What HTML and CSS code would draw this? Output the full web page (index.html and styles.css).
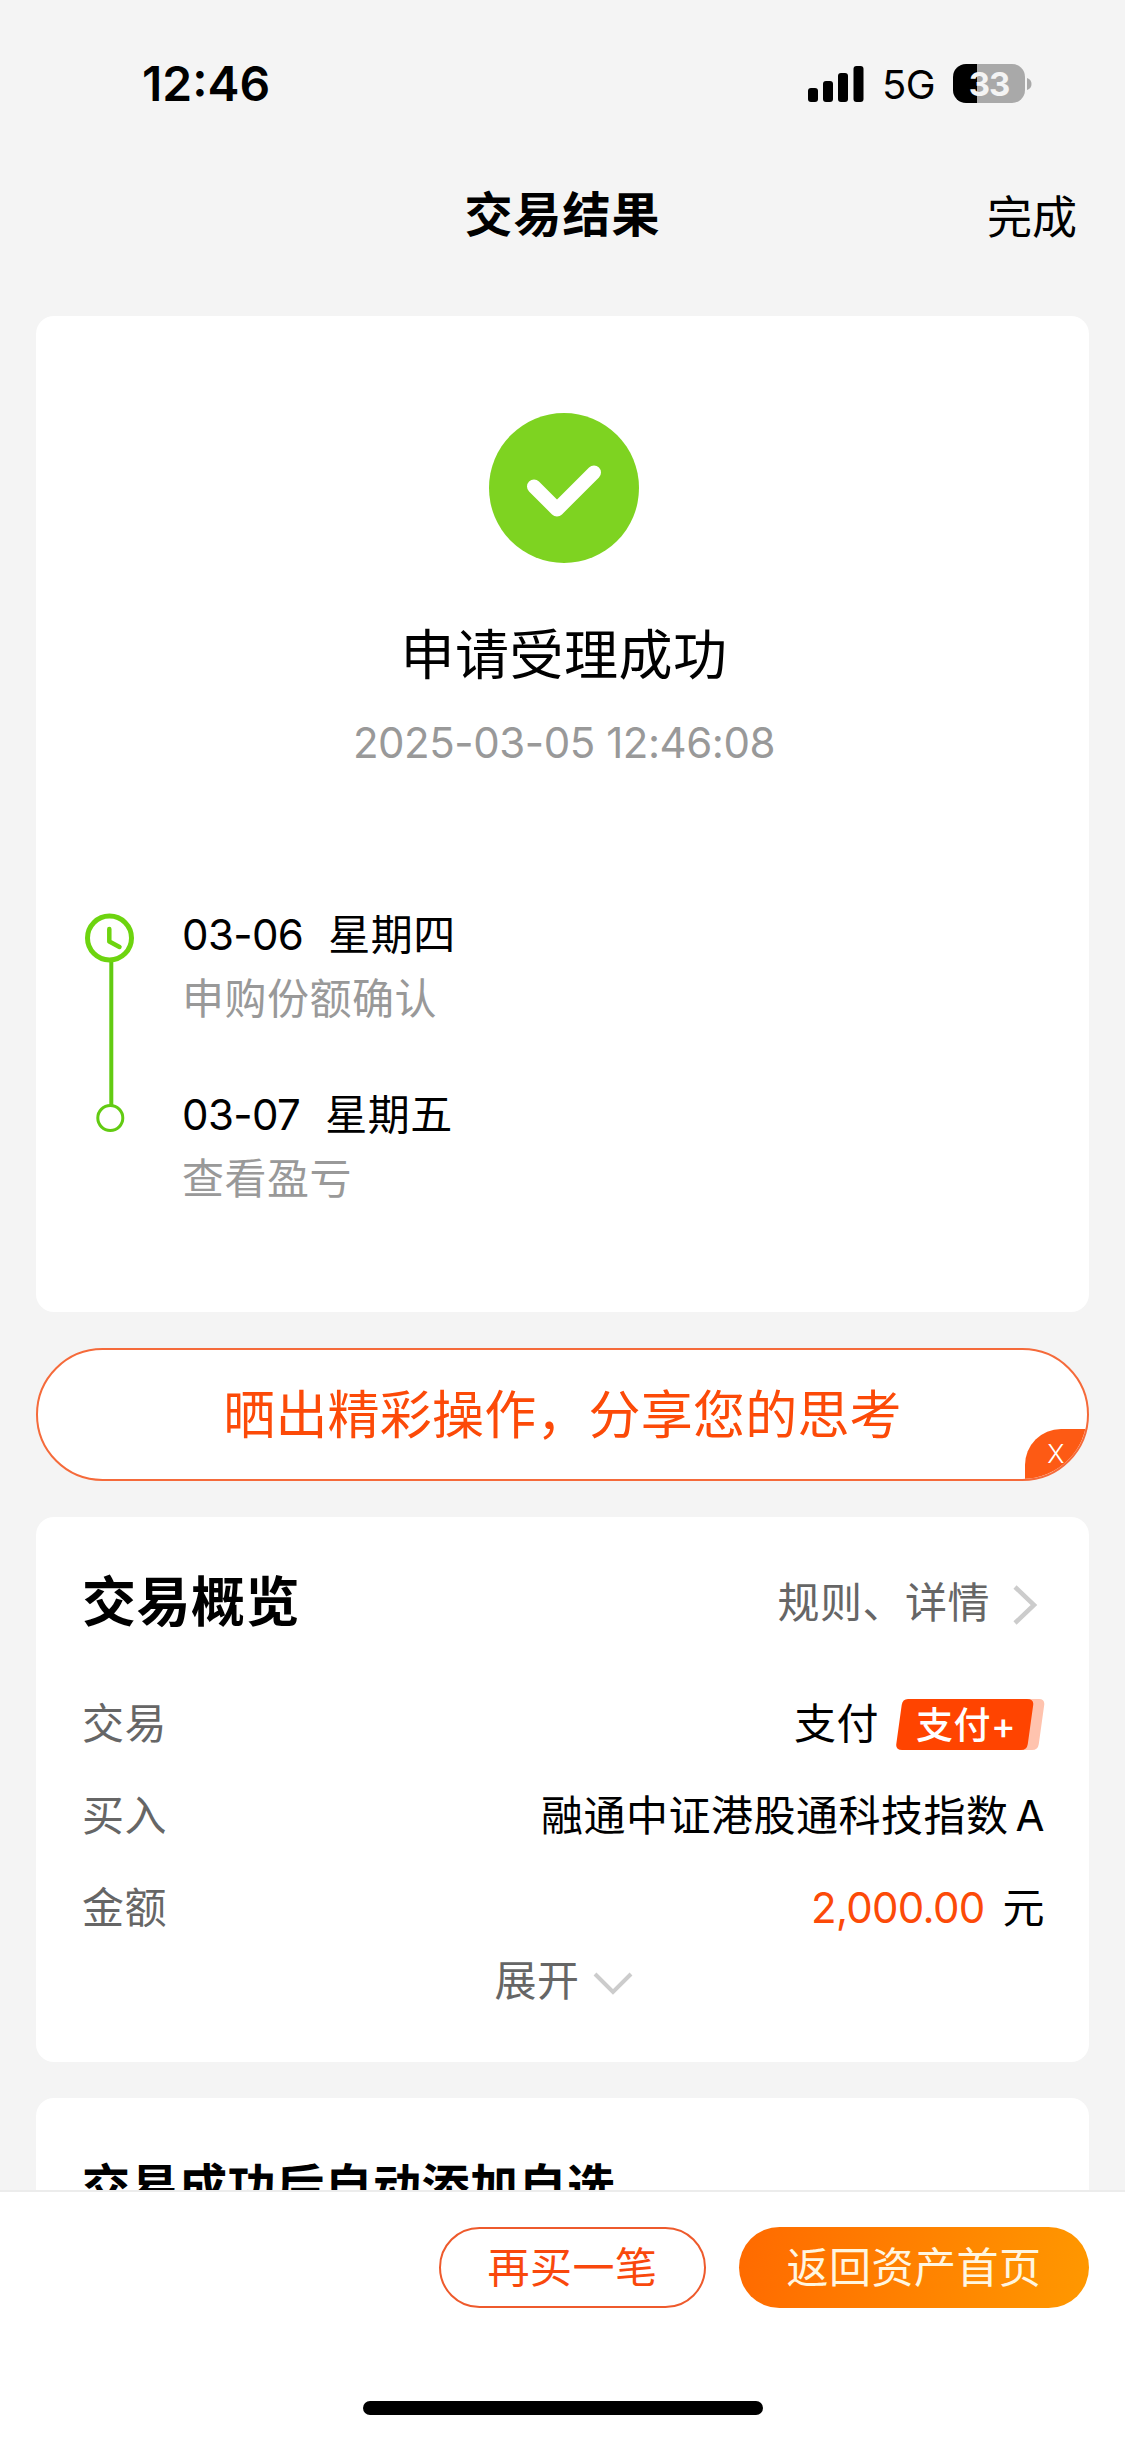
FILE: index.html
```
<!doctype html>
<html lang="zh-CN">
<head>
    <meta charset="UTF-8">
    <meta name="viewport" content="width=device-width,initial-scale=1,user-scalable=no"/>
    <title>交易结果</title>
    <link rel="stylesheet" href="styles.css">
</head>
<body>
<div class="wrap">
    <div class="status">
        <span class="time">12:46</span>
        <svg class="signal" width="56" height="36" viewBox="0 0 56 36">
            <rect x="0" y="22" width="10" height="14" rx="3"/>
            <rect x="15" y="15" width="10" height="21" rx="3"/>
            <rect x="30" y="7" width="10" height="29" rx="3"/>
            <rect x="45.5" y="0" width="10" height="36" rx="3"/>
        </svg>
        <span class="net">5G</span>
        <span class="battery">33</span>
        <svg class="cap" width="5" height="14" viewBox="0 0 5 14"><path d="M0 1Q4.500 2.500 4.500 7T0 13z" fill="#a9a9a9"/></svg>
    </div>
    <header>
        <h1>交易结果</h1>
        <a class="done">完成</a>
    </header>
    <section class="main">
        <div class="card result">
            <svg class="ok" width="150" height="150" viewBox="0 0 150 150">
                <circle cx="75" cy="75" r="75" fill="#7ed321"/>
                <path d="M45 73.500L68 96.500L105 59.500" fill="none" stroke="#fff" stroke-width="14" stroke-linecap="round" stroke-linejoin="round"/>
            </svg>
            <h2>申请受理成功</h2>
            <p class="date">2025-03-05 12:46:08</p>
            <div class="steps">
                <svg class="axis" width="97" height="308" viewBox="0 0 97 308" fill="none">
                    <path d="M26.300 59V203" stroke="#62cb12" stroke-width="4"/>
                    <circle cx="24.500" cy="35" r="22" stroke="#6dd40f" stroke-width="5"/>
                    <path d="M24.300 26V38.500L34.500 44" stroke="#6dd40f" stroke-width="4.500" stroke-linecap="round" stroke-linejoin="round"/>
                    <circle cx="25.300" cy="215" r="12.500" stroke="#62cb12" stroke-width="3"/>
                </svg>
                <dl>
                    <dt><span>03-06</span>星期四</dt>
                    <dd>申购份额确认</dd>
                    <dt><span>03-07</span>星期五</dt>
                    <dd>查看盈亏</dd>
                </dl>
            </div>
        </div>
        <div class="share">
            <span>晒出精彩操作，分享您的思考</span>
            <i class="close">X</i>
        </div>
        <div class="card overview">
            <div class="head">
                <h3>交易概览</h3>
                <a>规则、详情</a>
                <svg width="26" height="42" viewBox="0 0 26 42"><path d="M3 3L22 21L3 39" fill="none" stroke="#ccc" stroke-width="4.500"/></svg>
            </div>
            <ul>
                <li>
                    <label>交易</label>
                    <span>支付</span>
                    <em class="tag">
                        <svg width="149" height="51" viewBox="0 0 149 51">
                            <path d="M22 0H143Q149 0 148.200 6L142.800 45Q142 51 136 51H20z" fill="#ffc3ae"/>
                            <path d="M12 0H131Q138 0 137.200 6L131.800 45Q131 51 125 51H6Q-.5 51 .3 45L5.700 6Q6.500 0 12 0z" fill="#ff4400"/>
                        </svg>
                        <b>支付+</b>
                    </em>
                </li>
                <li>
                    <label>买入</label>
                    <span>融通中证港股通科技指数<s>A</s></span>
                </li>
                <li>
                    <label>金额</label>
                    <span><strong>2,000.00</strong>元</span>
                </li>
            </ul>
            <div class="more">
                展开
                <svg width="40" height="24" viewBox="0 0 40 24"><path d="M2 2L20 20L38 2" fill="none" stroke="#ccc" stroke-width="4"/></svg>
            </div>
        </div>
        <div class="card auto">
            <h4>交易成功后自动添加自选</h4>
        </div>
    </section>
    <footer>
        <div class="btns">
            <a class="btn">再买一笔</a>
            <a class="btn primary">返回资产首页</a>
        </div>
        <div class="home"></div>
    </footer>
</div>
</body>
</html>
```

FILE: styles.css
```
* {
    padding: 0;
    margin: 0;
    box-sizing: border-box;
}

body {
    font-family: Inter, "Noto Sans CJK SC", sans-serif;
    font-size: 42px;
    line-height: 1.4;
    letter-spacing: .5px;
    color: #000;
    background: #f4f4f4;
}

ul {
    list-style: none;
}

i, em, s {
    font-style: normal;
    text-decoration: none;
}

.wrap {
    width: 1125px;
    height: 2438px;
    display: flex;
    flex-direction: column;
    overflow: hidden;
}

/* status bar */
.status {
    height: 167px;
    padding: 0 93px 0 142px;
    display: flex;
    align-items: center;
    flex: none;
    letter-spacing: 0;
}

.time {
    flex: 1;
    font-size: 48px;
    font-weight: 600;
}

.net {
    width: 53px;
    margin: 3px 18px 0 18px;
    font-size: 40px;
    letter-spacing: -.5px;
}

.battery {
    width: 72px;
    height: 39px;
    border-radius: 13px;
    background: linear-gradient(90deg, #000 24px, #a9a9a9 24px);
    color: #f4f4f4;
    font-size: 33px;
    font-weight: 700;
    line-height: 40px;
    text-align: center;
    letter-spacing: -1px;
}

.cap {
    margin-left: 2px;
}

/* title bar */
header {
    height: 96px;
    flex: none;
    display: grid;
    grid-template-columns: 1fr auto 1fr;
    align-items: center;
    padding: 0 48px;
}

h1 {
    grid-column: 2;
    font-size: 48px;
    letter-spacing: 1px;
    line-height: 64px;
}

.done {
    justify-self: end;
    padding-top: 5px;
    font-size: 45px;
    letter-spacing: 0;
}

.main {
    flex: 1;
    min-height: 0;
    overflow: hidden;
    padding: 53px 36px 0;
    display: flex;
    flex-direction: column;
    gap: 36px;
}

.card {
    flex: none;
    background: #fff;
    border-radius: 18px;
    padding: 0 44px 0 46px;
}

.result {
    height: 996px;
    padding: 97px 46px 0 49px;
    text-align: center;
}

.ok {
    display: block;
    margin: 0 auto;
}

h2 {
    margin-top: 60px;
    font-size: 54px;
    font-weight: 400;
    line-height: 66px;
}

.date {
    margin-top: 29px;
    line-height: 50px;
    letter-spacing: -.45px;
    color: #999;
}

.steps {
    display: flex;
    margin-top: 135px;
    text-align: left;
}

.steps dl {
    line-height: 64px;
}

.steps dt span {
    margin-right: 25px;
    letter-spacing: -.6px;
}

.steps dd {
    color: #999;
    margin-bottom: 52px;
}

.share {
    flex: none;
    height: 133px;
    position: relative;
    overflow: hidden;
    border: 2px solid #f56a3a;
    border-radius: 67px;
    background: #fff;
    color: #fc4a08;
    font-size: 52px;
    letter-spacing: .2px;
    line-height: 131px;
    text-align: center;
}

.close {
    position: absolute;
    right: 0;
    bottom: 0;
    width: 62px;
    height: 50px;
    border-radius: 36px 0 0 0;
    background: #fd5a14;
    color: #fff;
    font-size: 26px;
    line-height: 50px;
    font-weight: 300;
}

.overview {
    height: 545px;
    padding-top: 47px;
}

.head {
    height: 78px;
    margin-bottom: 36px;
    display: flex;
    align-items: center;
}

h3 {
    flex: 1;
    font-size: 54px;
}

.head a {
    color: #666;
}

.head svg {
    margin: 4px 7px 0 22px;
}

.overview li {
    height: 92px;
    display: flex;
    align-items: center;
}

.overview label {
    flex: 1;
    color: #666;
}

.overview s {
    margin-left: 7px;
}

.overview strong {
    margin-right: 18px;
    font-weight: 400;
    letter-spacing: -.7px;
    color: #fc4a08;
}

.tag {
    margin-left: 17px;
    height: 51px;
    display: grid;
}

.tag svg, .tag b {
    grid-area: 1 / 1;
}

.tag b {
    padding-left: 20px;
    font-size: 37px;
    font-weight: 500;
    line-height: 53px;
    color: #fff;
}

.more {
    height: 54px;
    display: flex;
    justify-content: center;
    align-items: center;
    gap: 13px;
    color: #666;
}

.more svg {
    margin-top: 6px;
}

.auto {
    height: 300px;
    padding-top: 56px;
}

h4 {
    font-size: 48px;
    line-height: 66px;
}

/* bottom buttons */
footer {
    flex: none;
    height: 248px;
    padding: 35px 36px 23px;
    border-top: 2px solid #ececec;
    background: #fff;
    display: flex;
    flex-direction: column;
    justify-content: space-between;
}

.btns {
    display: flex;
    justify-content: flex-end;
    gap: 33px;
}

.btn {
    width: 267px;
    height: 81px;
    border: 2px solid #ee5a2c;
    border-radius: 41px;
    color: #f9480c;
    line-height: 77px;
    text-align: center;
}

.primary {
    width: 350px;
    border: 0;
    background: linear-gradient(100deg, #ff6a00, #ff9800);
    color: #fff6e0;
    line-height: 81px;
}

.home {
    width: 400px;
    height: 14px;
    margin: 0 auto;
    border-radius: 7px;
    background: #000;
}
```
